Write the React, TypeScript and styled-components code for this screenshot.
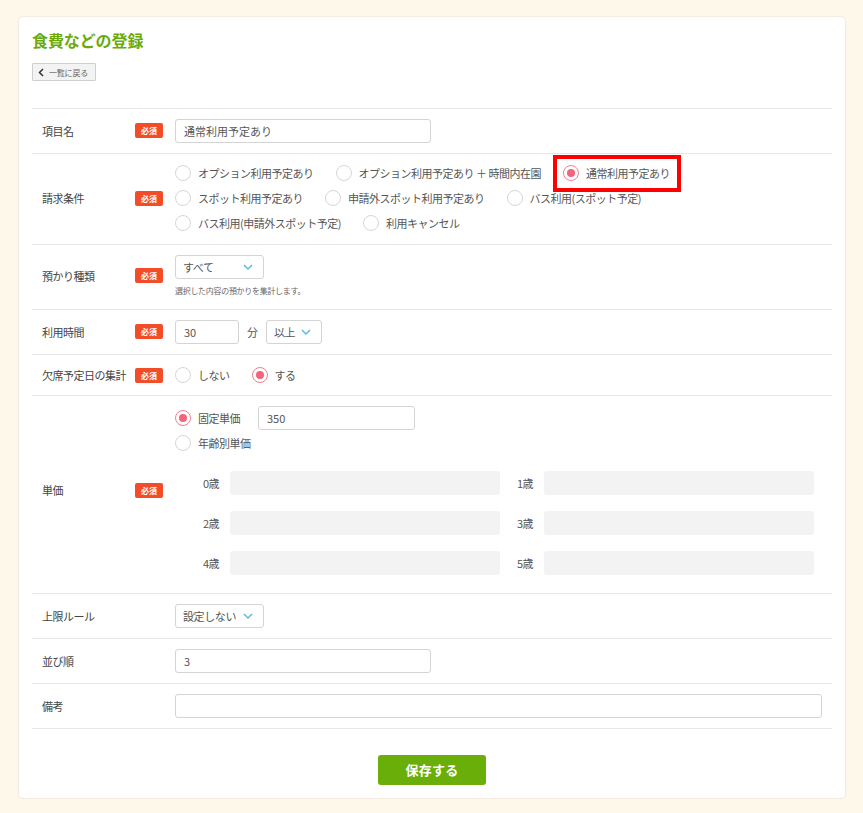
import React from "react";
import styled, { createGlobalStyle, css } from "styled-components";

const GlobalStyle = createGlobalStyle`
  html, body {
    margin: 0;
    padding: 0;
    background: #fdf8ea;
    font-family: "Noto Sans CJK JP", "Noto Sans", sans-serif;
    color: #444;
  }
  * { box-sizing: border-box; }
`;

const Page = styled.div`
  padding: 16px 17px 14px 18px;
`;

const Card = styled.div`
  width: 828px;
  background: #fff;
  border: 1px solid #f1ecdf;
  border-radius: 5px;
  padding: 14px 13px 13px;
`;

const Title = styled.h1`
  margin: 0;
  font-size: 16px;
  line-height: 18px;
  font-weight: 700;
  color: #6aab0a;
  letter-spacing: -0.1px;
`;

const BackButton = styled.button`
  margin-top: 14px;
  display: inline-flex;
  align-items: center;
  gap: 5px;
  height: 18px;
  padding: 0 7px 0 5px;
  background: #f3f3f3;
  border: 1px solid #cfcfcf;
  border-radius: 1px;
  font-family: inherit;
  font-size: 8px;
  color: #666;
  letter-spacing: -0.2px;
`;

const Table = styled.div`
  margin-top: 26px;
  border-top: 1px solid #e6e6e6;
`;

const Field = styled.div<{ $pad?: string }>`
  display: grid;
  grid-template-columns: 93px 40px 1fr;
  align-items: center;
  padding: ${(p) => p.$pad ?? "10px 0"};
  padding-left: 10px;
  border-bottom: 1px solid #e6e6e6;
`;

const Label = styled.div`
  font-size: 11px;
  letter-spacing: -0.5px;
  color: #444;
  white-space: nowrap;
`;

const Badge = styled.span`
  display: inline-flex;
  align-items: center;
  justify-content: center;
  width: 28px;
  height: 15px;
  border-radius: 2px;
  background: #f24d28;
  color: #fff;
  font-size: 8px;
  font-weight: 700;
`;

const Content = styled.div`
  display: flex;
  flex-direction: column;
`;

const Line = styled.div<{ $gap?: number }>`
  display: flex;
  align-items: center;
  gap: ${(p) => p.$gap ?? 22}px;
`;

const inputBase = css`
  height: 24px;
  border: 1px solid #d4d4d4;
  border-radius: 3px;
  padding: 0 8px;
  font-family: inherit;
  font-size: 11px;
  color: #555;
  background: #fff;
  outline: none;
`;

const TextInput = styled.input<{ $w: number }>`
  ${inputBase};
  width: ${(p) => p.$w}px;
`;

const SelectBox = styled.div<{ $w: number }>`
  ${inputBase};
  width: ${(p) => p.$w}px;
  display: flex;
  align-items: center;
  justify-content: space-between;
  padding: 0 10px 0 7px;
  letter-spacing: -0.4px;
`;

const HelpText = styled.div`
  margin-top: 6px;
  font-size: 8px;
  letter-spacing: -0.3px;
  color: #666;
  line-height: 12px;
`;

const Unit = styled.span`
  margin: 0 8px 0 8px;
  font-size: 11px;
  color: #555;
`;

const RadioItem = styled.label<{ $marked?: boolean }>`
  position: relative;
  display: inline-flex;
  align-items: center;
  gap: 7px;
  height: 25px;
  font-size: 11px;
  letter-spacing: -0.5px;
  color: #555;
  white-space: nowrap;
  ${(p) =>
    p.$marked &&
    css`
      &::after {
        content: "";
        position: absolute;
        left: -10px;
        right: -11px;
        top: -6px;
        bottom: -6px;
        border: 4px solid #ff0000;
      }
    `}
`;

const Circle = styled.span<{ $on?: boolean }>`
  width: 16px;
  height: 16px;
  border-radius: 50%;
  border: 1px solid ${(p) => (p.$on ? "#f07f90" : "#d6d6d6")};
  display: flex;
  align-items: center;
  justify-content: center;
  background: #fff;
  &::before {
    content: "";
    width: 8px;
    height: 8px;
    border-radius: 50%;
    background: ${(p) => (p.$on ? "#f3647a" : "transparent")};
  }
`;

const AgeGrid = styled.div`
  margin: 15px 0 0 28px;
  display: grid;
  grid-template-columns: 297px 297px;
  column-gap: 17px;
  row-gap: 16px;
`;

const AgeCell = styled.div`
  display: grid;
  grid-template-columns: 27px 270px;
  align-items: center;
`;

const AgeLabel = styled.span`
  font-size: 11px;
  color: #555;
  letter-spacing: -0.5px;
`;

const AgeInput = styled.input`
  height: 24px;
  border: none;
  border-radius: 3px;
  background: #f3f3f3;
  outline: none;
`;

const Footer = styled.div`
  display: flex;
  justify-content: center;
  padding-top: 26px;
`;

const SaveButton = styled.button`
  width: 108px;
  height: 30px;
  border: none;
  border-radius: 3px;
  background: #6aae0a;
  color: #fff;
  font-family: inherit;
  font-size: 13px;
  font-weight: 700;
  letter-spacing: 0.3px;
`;

const Chevron = () => (
  <svg width="10" height="6" viewBox="0 0 10 6">
    <polyline points="1,1 5,5 9,1" fill="none" stroke="#5bbfdc" strokeWidth="1.5" />
  </svg>
);

function Radio({ text, on, marked }: { text: string; on?: boolean; marked?: boolean }) {
  return (
    <RadioItem $marked={marked}>
      <Circle $on={on} />
      {text}
    </RadioItem>
  );
}

const billingRows = [
  ["オプション利用予定あり", "オプション利用予定あり ＋ 時間内在園", "通常利用予定あり"],
  ["スポット利用予定あり", "申請外スポット利用予定あり", "バス利用(スポット予定)"],
  ["バス利用(申請外スポット予定)", "利用キャンセル"],
];

const ages = ["0歳", "1歳", "2歳", "3歳", "4歳", "5歳"];

export default function App() {
  return (
    <Page>
      <GlobalStyle />
      <Card>
        <Title>食費などの登録</Title>
        <BackButton>
          <svg width="6" height="9" viewBox="0 0 6 9">
            <polyline points="5,1 1.5,4.5 5,8" fill="none" stroke="#333" strokeWidth="1.5" />
          </svg>
          一覧に戻る
        </BackButton>

        <Table>
          <Field>
            <Label>項目名</Label>
            <Badge>必須</Badge>
            <Content>
              <TextInput $w={256} defaultValue="通常利用予定あり" />
            </Content>
          </Field>

          <Field $pad="7px 0 8px">
            <Label>請求条件</Label>
            <Badge>必須</Badge>
            <Content>
              {billingRows.map((row, i) => (
                <Line key={i}>
                  {row.map((t) => (
                    <Radio key={t} text={t} on={t === "通常利用予定あり"} marked={t === "通常利用予定あり"} />
                  ))}
                </Line>
              ))}
            </Content>
          </Field>

          <Field $pad="10px 0 12px">
            <Label>預かり種類</Label>
            <Badge>必須</Badge>
            <Content>
              <SelectBox $w={89}>
                すべて
                <Chevron />
              </SelectBox>
              <HelpText>選択した内容の預かりを集計します。</HelpText>
            </Content>
          </Field>

          <Field>
            <Label>利用時間</Label>
            <Badge>必須</Badge>
            <Line $gap={0}>
              <TextInput $w={64} defaultValue="30" />
              <Unit>分</Unit>
              <SelectBox $w={56}>
                以上
                <Chevron />
              </SelectBox>
            </Line>
          </Field>

          <Field $pad="8px 0 7px">
            <Label>欠席予定日の集計</Label>
            <Badge>必須</Badge>
            <Line>
              <Radio text="しない" />
              <Radio text="する" on />
            </Line>
          </Field>

          <Field $pad="10px 0 18px">
            <Label>単価</Label>
            <Badge>必須</Badge>
            <Content>
              <Line $gap={18}>
                <Radio text="固定単価" on />
                <TextInput $w={157} defaultValue="350" />
              </Line>
              <Line>
                <Radio text="年齢別単価" />
              </Line>
              <AgeGrid>
                {ages.map((a) => (
                  <AgeCell key={a}>
                    <AgeLabel>{a}</AgeLabel>
                    <AgeInput />
                  </AgeCell>
                ))}
              </AgeGrid>
            </Content>
          </Field>

          <Field>
            <Label>上限ルール</Label>
            <span />
            <Content>
              <SelectBox $w={89}>
                設定しない
                <Chevron />
              </SelectBox>
            </Content>
          </Field>

          <Field>
            <Label>並び順</Label>
            <span />
            <Content>
              <TextInput $w={256} defaultValue="3" />
            </Content>
          </Field>

          <Field>
            <Label>備考</Label>
            <span />
            <Content>
              <TextInput $w={647} />
            </Content>
          </Field>
        </Table>

        <Footer>
          <SaveButton>保存する</SaveButton>
        </Footer>
      </Card>
    </Page>
  );
}
